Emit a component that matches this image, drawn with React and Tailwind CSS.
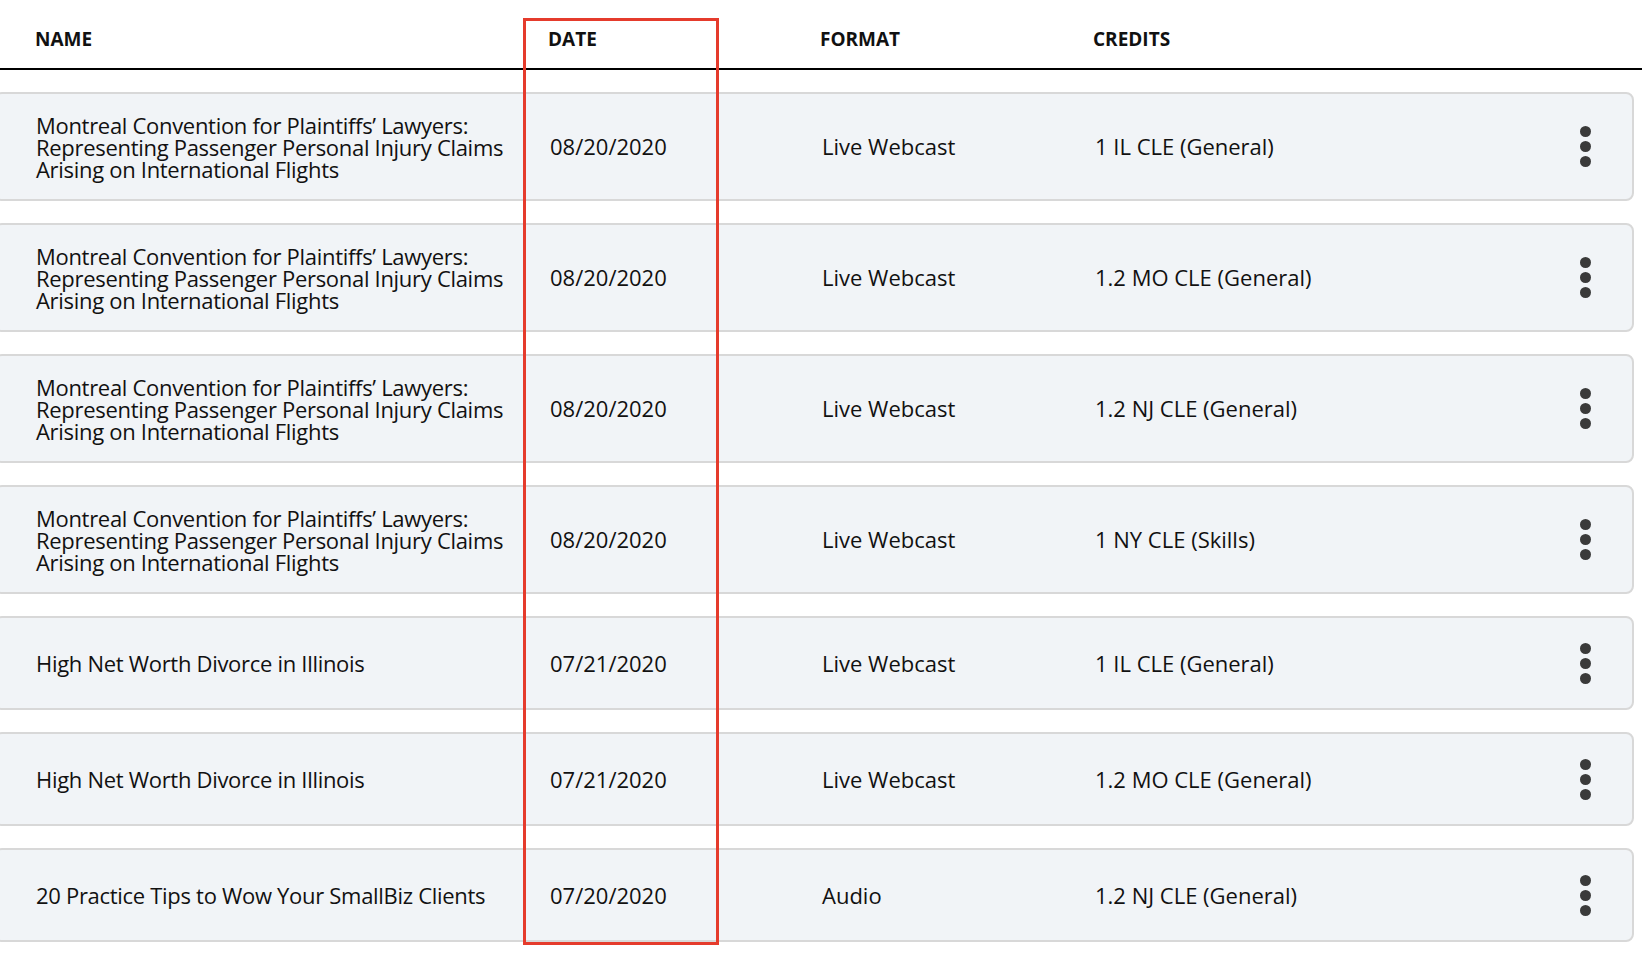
const M = "Montreal Convention for Plaintiffs’ Lawyers: Representing Passenger Personal Injury Claims Arising on International Flights";
const rows = [
  [M, "08/20/2020", "Live Webcast", "1 IL CLE (General)", true],
  [M, "08/20/2020", "Live Webcast", "1.2 MO CLE (General)", true],
  [M, "08/20/2020", "Live Webcast", "1.2 NJ CLE (General)", true],
  [M, "08/20/2020", "Live Webcast", "1 NY CLE (Skills)", true],
  ["High Net Worth Divorce in Illinois", "07/21/2020", "Live Webcast", "1 IL CLE (General)", false],
  ["High Net Worth Divorce in Illinois", "07/21/2020", "Live Webcast", "1.2 MO CLE (General)", false],
  ["20 Practice Tips to Wow Your SmallBiz Clients", "07/20/2020", "Audio", "1.2 NJ CLE (General)", false],
];
function Dots() {
  return (
    <div className="flex flex-col gap-[4px]">
      <span className="w-[11px] h-[11px] rounded-full bg-[#3a3a3a]" />
      <span className="w-[11px] h-[11px] rounded-full bg-[#3a3a3a]" />
      <span className="w-[11px] h-[11px] rounded-full bg-[#3a3a3a]" />
    </div>
  );
}
export default function App() {
  return (
    <div className="relative w-[1642px] h-[958px] overflow-hidden bg-white text-[#111]" style={{ fontFamily: '"Open Sans", sans-serif' }}>
      <div className="flex items-center h-[70px] border-b-2 border-black w-[1642px] font-bold text-[19px] pt-[10px]">
        <div className="w-[548px] pl-[35px]">NAME</div>
        <div className="w-[272px]">DATE</div>
        <div className="w-[273px]">FORMAT</div>
        <div>CREDITS</div>
      </div>
      <div className="flex flex-col gap-[22px] pt-[22px] w-[1642px]">
        {rows.map((r, i) => (
          <div key={i} className={"flex items-center bg-[#f1f4f7] border-2 border-[#d8d8d8] rounded-[8px] -ml-[6px] w-[1640px] text-[22px] " + (r[4] ? "h-[109px]" : "h-[94px]")}>
            <div className="w-[554px] pl-[40px] pr-[10px] leading-[22px] tracking-[-0.3px]">{r[0]}</div>
            <div className="w-[272px]">{r[1]}</div>
            <div className="w-[273px]">{r[2]}</div>
            <div className="w-[485px]">{r[3]}</div>
            <Dots />
          </div>
        ))}
      </div>
      <div className="absolute left-[523px] top-[18px] w-[196px] h-[927px] border-[3px] border-[#e53b2c]" />
    </div>
  );
}
